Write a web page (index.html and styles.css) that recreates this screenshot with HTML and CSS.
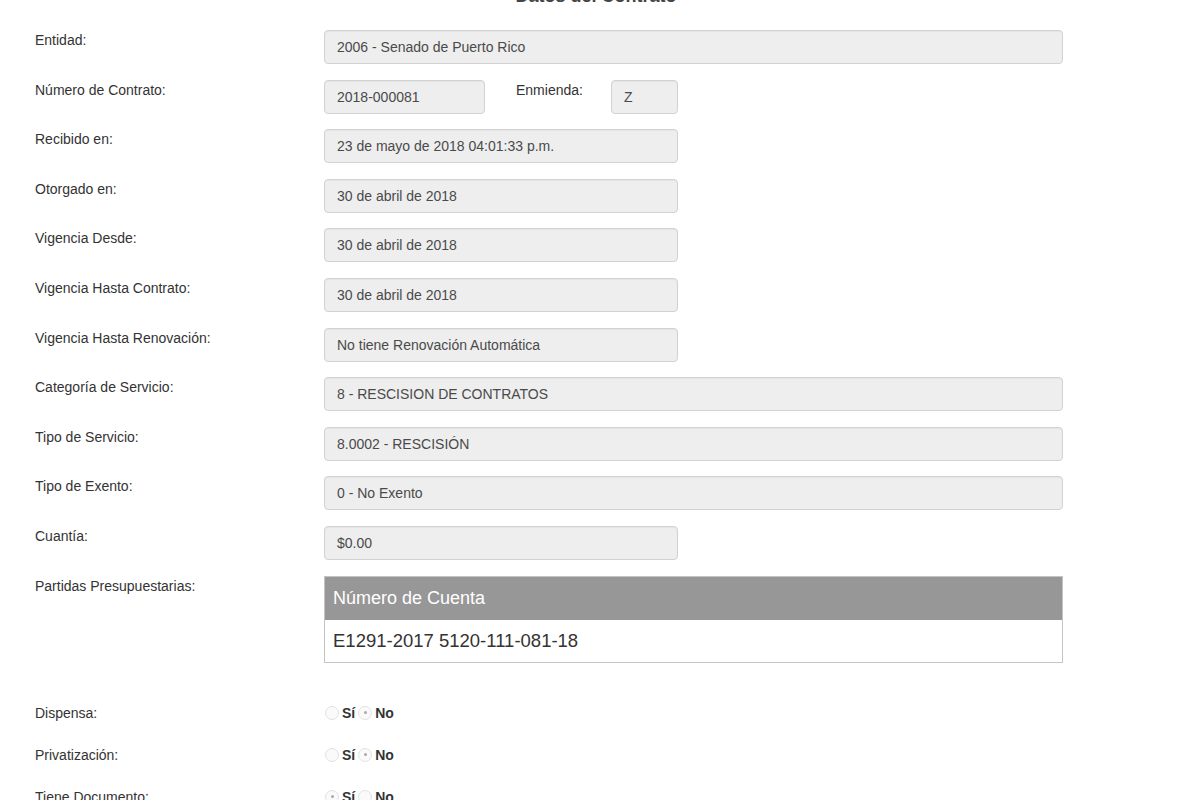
FILE: index.html
```html
<!DOCTYPE html>
<html lang="es">
<head>
<meta charset="utf-8">
<title>Datos del Contrato</title>
<link rel="stylesheet" href="styles.css">
</head>
<body>
<div class="page">
  <h2 class="title">Datos del Contrato</h2>
  <div class="form">
    <div class="row">
      <div class="label">Entidad:</div>
      <div class="field full">2006 - Senado de Puerto Rico</div>
    </div>
    <div class="row">
      <div class="label">Número de Contrato:</div>
      <div class="field num">2018-000081</div>
      <div class="sublabel">Enmienda:</div>
      <div class="field tiny">Z</div>
    </div>
    <div class="row">
      <div class="label">Recibido en:</div>
      <div class="field half">23 de mayo de 2018 04:01:33 p.m.</div>
    </div>
    <div class="row">
      <div class="label">Otorgado en:</div>
      <div class="field half">30 de abril de 2018</div>
    </div>
    <div class="row">
      <div class="label">Vigencia Desde:</div>
      <div class="field half">30 de abril de 2018</div>
    </div>
    <div class="row">
      <div class="label">Vigencia Hasta Contrato:</div>
      <div class="field half">30 de abril de 2018</div>
    </div>
    <div class="row">
      <div class="label">Vigencia Hasta Renovación:</div>
      <div class="field half">No tiene Renovación Automática</div>
    </div>
    <div class="row">
      <div class="label">Categoría de Servicio:</div>
      <div class="field full">8 - RESCISION DE CONTRATOS</div>
    </div>
    <div class="row">
      <div class="label">Tipo de Servicio:</div>
      <div class="field full">8.0002 - RESCISIÓN</div>
    </div>
    <div class="row">
      <div class="label">Tipo de Exento:</div>
      <div class="field full">0 - No Exento</div>
    </div>
    <div class="row">
      <div class="label">Cuantía:</div>
      <div class="field half">$0.00</div>
    </div>
    <div class="row table-row">
      <div class="label">Partidas Presupuestarias:</div>
      <table class="accounts">
        <thead><tr><th>Número de Cuenta</th></tr></thead>
        <tbody><tr><td>E1291-2017 5120-111-081-18</td></tr></tbody>
      </table>
    </div>
  </div>
  <div class="radios">
    <div class="rrow">
      <div class="label">Dispensa:</div>
      <div class="opts"><span class="radio"></span><span class="opt">Sí</span><span class="radio on"></span><span class="opt">No</span></div>
    </div>
    <div class="rrow">
      <div class="label">Privatización:</div>
      <div class="opts"><span class="radio"></span><span class="opt">Sí</span><span class="radio on"></span><span class="opt">No</span></div>
    </div>
    <div class="rrow">
      <div class="label">Tiene Documento:</div>
      <div class="opts"><span class="radio on"></span><span class="opt">Sí</span><span class="radio"></span><span class="opt">No</span></div>
    </div>
  </div>
</div>
</body>
</html>
```

FILE: styles.css
```css
html, body {
  margin: 0;
  padding: 0;
  background: #ffffff;
}
body {
  font-family: "Liberation Sans", Arial, Helvetica, sans-serif;
  font-size: 14px;
  color: #333333;
  overflow: hidden;
}
.page {
  width: 1200px;
  height: 800px;
  overflow: hidden;
  padding-left: 35px;
  box-sizing: border-box;
}
.title {
  margin: -12px 0 0 -35px;
  width: 1235px;
  height: 16px;
  line-height: 16px;
  font-size: 18px;
  font-weight: bold;
  text-align: center;
  color: #444;
  padding: 0 35px 0 0;
  box-sizing: border-box;
  transform: translateX(-4px);
}
.form {
  margin-top: 26px;
  display: flex;
  flex-direction: column;
  gap: 15.6px;
}
.row {
  display: flex;
  align-items: flex-start;
}
.label {
  width: 289px;
  flex: none;
  line-height: 18px;
  margin-top: 1px;
  color: #333;
}
.field {
  height: 34px;
  box-sizing: border-box;
  background: #eeeeee;
  border: 1px solid #d2d2d2;
  border-radius: 4px;
  padding: 0 12px;
  line-height: 32px;
  color: #4a4a4a;
  white-space: nowrap;
  box-shadow: inset 0 1px 1px rgba(0,0,0,0.04);
}
.full { width: 739px; }
.half { width: 354px; }
.num { width: 161px; }
.tiny { width: 67px; }
.sublabel {
  width: 126px;
  box-sizing: border-box;
  padding-left: 31px;
  line-height: 18px;
  margin-top: 1px;
}
.accounts {
  width: 739px;
  border-collapse: collapse;
  border: 1px solid #c4c4c4;
  margin-top: 0;
}
.accounts th {
  background: #979797;
  color: #ffffff;
  font-weight: normal;
  font-size: 18px;
  text-align: left;
  height: 44px;
  padding: 0 8px;
  box-sizing: border-box;
}
.accounts td {
  height: 42px;
  padding: 0 8px;
  font-size: 18.5px;
  color: #333;
  box-sizing: border-box;
}
.radios {
  margin-top: 41px;
  display: flex;
  flex-direction: column;
  gap: 24px;
}
.rrow {
  display: flex;
  align-items: center;
  height: 18px;
}
.rrow .label { margin-top: 0; }
.opts {
  display: flex;
  align-items: center;
}
.radio {
  width: 14px;
  height: 14px;
  box-sizing: border-box;
  border: 1px solid #e2e2e2;
  border-radius: 50%;
  background: #fafafa;
  position: relative;
  margin-left: 1px;
  margin-right: 3px;
}
.radio.on::after {
  content: "";
  position: absolute;
  left: 4.5px;
  top: 4.5px;
  width: 3px;
  height: 3px;
  border-radius: 50%;
  background: #aaa;
}
.opt {
  font-weight: bold;
  color: #333;
  margin-right: 2px;
}
```
